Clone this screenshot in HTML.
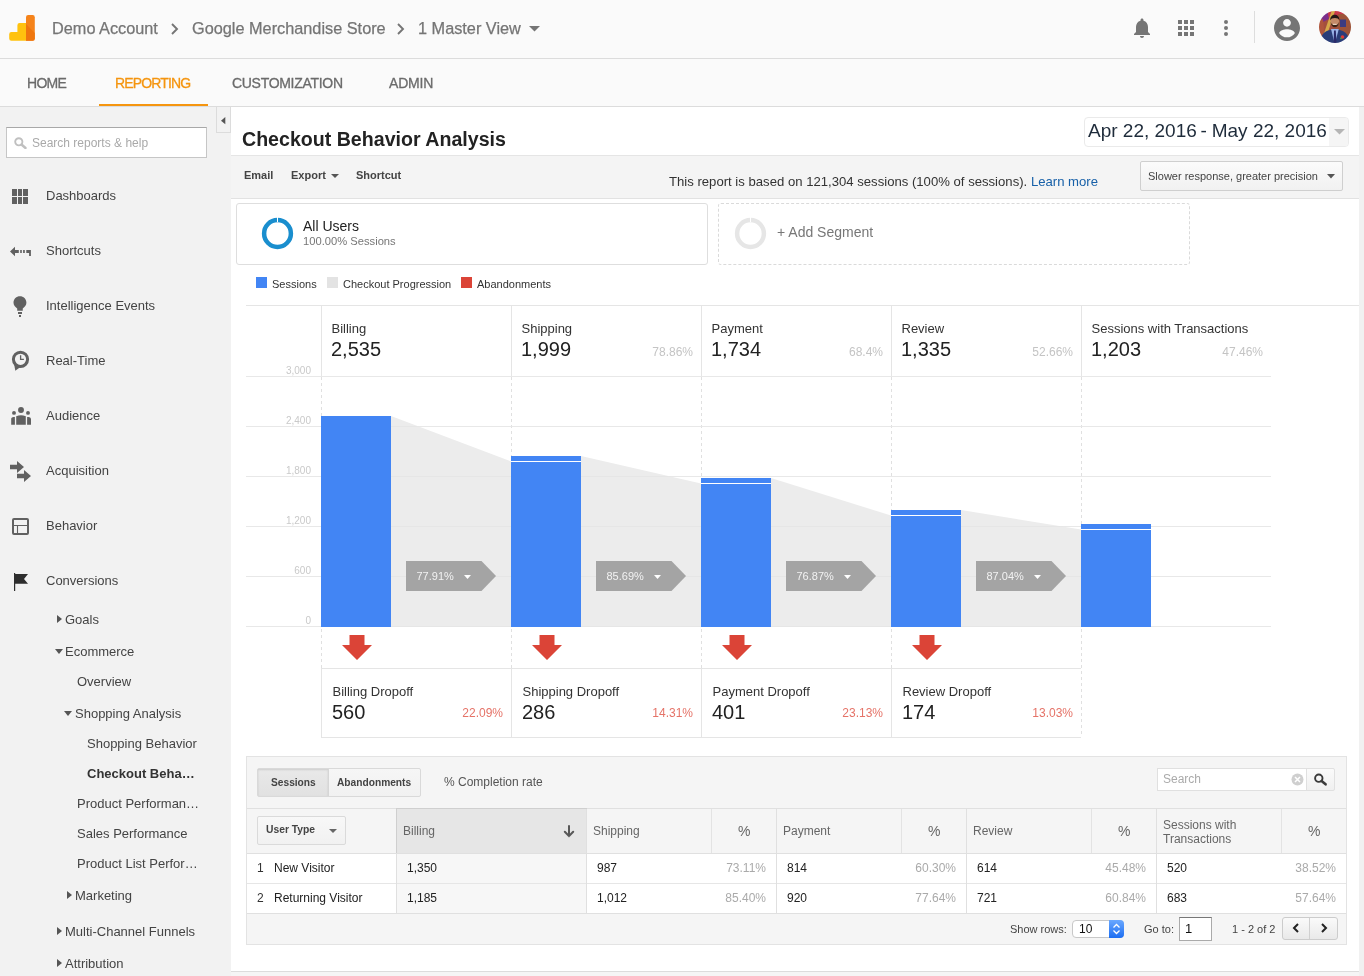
<!DOCTYPE html>
<html><head><meta charset="utf-8">
<style>
*{margin:0;padding:0;box-sizing:border-box}
html,body{width:1364px;height:976px;overflow:hidden;background:#fff;font-family:"Liberation Sans",sans-serif;position:relative}
body{will-change:transform}
.a{position:absolute;white-space:nowrap}
#hdr{left:0;top:0;width:1364px;height:59px;background:#fafafa;border-bottom:1px solid #dcdcdc}
#tabs{left:0;top:59px;width:1364px;height:48px;background:#fafafa;border-bottom:1px solid #dcdcdc}
.crumb{font-size:16.3px;color:#757575;top:19px;-webkit-text-stroke:0.25px #757575}
.tab{font-size:14px;color:#6b6b6b;top:75px;-webkit-text-stroke:0.3px currentColor}
#side{left:0;top:107px;width:231px;height:869px;background:#f2f2f2}
.nav{font-size:13px;color:#444;left:46px}
.sub{font-size:13px;color:#444}
.ico{fill:#616161}
#main{left:231px;top:107px;width:1128px;height:869px;background:#fff}
#rstrip{left:1359px;top:107px;width:5px;height:869px;background:#f1f1f1}
</style></head><body>

<!-- HEADER -->
<div class="a" id="hdr"></div>
<svg class="a" style="left:0;top:0" width="40" height="45" viewBox="0 0 40 45">
<path d="M9.2 34.2 a2.2 2.2 0 0 1 2.2-2.2 H17.4 V25.3 a2.2 2.2 0 0 1 2.2-2.2 H26.2 V40.8 H11.4 a2.2 2.2 0 0 1 -2.2-2.2 Z" fill="#ffc20e"/>
<path d="M26 17.2 a2.2 2.2 0 0 1 2.2-2.2 h4.4 a2.2 2.2 0 0 1 2.2 2.2 V38.6 a2.2 2.2 0 0 1 -2.2 2.2 H26 Z" fill="#f5831a"/>
<path d="M26 24 L34.8 33 V38.6 a2.2 2.2 0 0 1 -2.2 2.2 H26 Z" fill="#ef760e"/>
</svg>
<div class="a crumb" style="left:52px">Demo Account</div>
<svg class="a" style="left:170px;top:23px" width="10" height="12" viewBox="0 0 10 12"><path d="M2 1 L7 6 L2 11" stroke="#757575" stroke-width="1.9" fill="none"/></svg>
<div class="a crumb" style="left:192px">Google Merchandise Store</div>
<svg class="a" style="left:396px;top:23px" width="10" height="12" viewBox="0 0 10 12"><path d="M2 1 L7 6 L2 11" stroke="#757575" stroke-width="1.9" fill="none"/></svg>
<div class="a crumb" style="left:418px">1 Master View</div>
<svg class="a" style="left:529px;top:26px" width="11" height="6" viewBox="0 0 11 6"><path d="M0 0 L11 0 L5.5 5.5Z" fill="#757575"/></svg>

<!-- header right icons -->
<svg class="a" style="left:1130px;top:16px" width="24" height="24" viewBox="0 0 24 24"><path d="M12 22c1.1 0 2-.9 2-2h-4c0 1.1.89 2 2 2zm6-6v-5c0-3.07-1.64-5.64-4.5-6.32V4c0-.83-.67-1.5-1.5-1.5s-1.5.67-1.5 1.5v.68C7.63 5.36 6 7.92 6 11v5l-2 2v1h16v-1l-2-2z" fill="#757575"/></svg>
<svg class="a" style="left:1178px;top:20px" width="16" height="16" viewBox="0 0 16 16" fill="#757575">
<rect x="0" y="0" width="4" height="4"/><rect x="6" y="0" width="4" height="4"/><rect x="12" y="0" width="4" height="4"/>
<rect x="0" y="6" width="4" height="4"/><rect x="6" y="6" width="4" height="4"/><rect x="12" y="6" width="4" height="4"/>
<rect x="0" y="12" width="4" height="4"/><rect x="6" y="12" width="4" height="4"/><rect x="12" y="12" width="4" height="4"/></svg>
<svg class="a" style="left:1222px;top:19px" width="8" height="18" viewBox="0 0 8 18" fill="#757575"><circle cx="4" cy="3" r="2"/><circle cx="4" cy="9" r="2"/><circle cx="4" cy="15" r="2"/></svg>
<div class="a" style="left:1254px;top:11px;width:1px;height:32px;background:#ddd"></div>
<svg class="a" style="left:1274px;top:15px" width="26" height="26" viewBox="2 2 20 20"><path d="M12 2C6.48 2 2 6.48 2 12s4.48 10 10 10 10-4.48 10-10S17.52 2 12 2zm0 3c1.66 0 3 1.34 3 3s-1.34 3-3 3-3-1.34-3-3 1.34-3 3-3zm0 14.2c-2.5 0-4.71-1.28-6-3.22.03-1.99 4-3.08 6-3.08 1.99 0 5.97 1.09 6 3.08-1.29 1.94-3.5 3.22-6 3.22z" fill="#757575"/></svg>
<svg class="a" style="left:1319px;top:11px" width="32" height="32" viewBox="0 0 32 32">
<defs><clipPath id="av"><circle cx="16" cy="16" r="16"/></clipPath><filter id="bl"><feGaussianBlur stdDeviation="0.5"/></filter></defs>
<g clip-path="url(#av)"><g filter="url(#bl)">
<rect x="-2" y="-2" width="36" height="36" fill="#a4503c"/>
<rect x="-2" y="-2" width="36" height="8" fill="#c8384a"/>
<path d="M-2 4 L8 -2 L10 8 L-2 14Z" fill="#7a2e8a"/>
<path d="M-2 10 L4 8 L6 30 L-2 30Z" fill="#b0563e"/>
<path d="M3 28 L13 -1 L16 0 L6 30Z" fill="#d6a848"/>
<rect x="19" y="3" width="14" height="22" fill="#9c5238"/>
<rect x="21" y="8.5" width="6" height="7.5" fill="#3a3a80"/>

<ellipse cx="15.8" cy="10.5" rx="4.3" ry="5.8" fill="#c48a68"/>
<path d="M11.2 9.5 C10.8 1.8 20.8 1.8 20.4 9.5 C19.8 6.2 12 6.2 11.2 9.5Z" fill="#241812"/>
<path d="M11.6 11 C11.8 18 19.8 18 20 11 L19.2 12.5 C18.5 14.5 13 14.5 12.4 12.5Z" fill="#3a2418"/><rect x="14" y="12.8" width="3.6" height="1" fill="#f0e0d0"/>
<path d="M1 34 C1 22 7 18.5 15.8 18.5 C24.5 18.5 30.5 22 31 34Z" fill="#2c3e78"/>
<path d="M12 18 L15.8 33 L19.8 18Z" fill="#9ab4e8"/>
<path d="M15 19.5 L16.8 19.5 L17.6 33 L14.6 33Z" fill="#2c2c6a"/>
<circle cx="23.5" cy="26" r="1.8" fill="#e03a36"/>
<circle cx="22" cy="27.3" r="0.9" fill="#4aa040"/>
</g></g></svg>

<!-- TABS -->
<div class="a" id="tabs"></div>
<div class="a tab" style="left:27px;letter-spacing:-0.7px">HOME</div>
<div class="a tab" style="left:115px;color:#f5950f;letter-spacing:-0.85px">REPORTING</div>
<div class="a" style="left:99px;top:104px;width:109px;height:2px;background:#f5950f"></div>
<div class="a tab" style="left:232px;letter-spacing:-0.3px">CUSTOMIZATION</div>
<div class="a tab" style="left:389px;letter-spacing:-0.2px">ADMIN</div>

<!-- SIDEBAR -->
<div class="a" id="side"></div>
<div class="a" id="rstrip"></div>

<!-- collapse btn -->
<div class="a" style="left:216px;top:107px;width:15px;height:26px;background:#f2f2f2;border:1px solid #dcdcdc;border-top:none"></div>
<svg class="a" style="left:221px;top:117px" width="4.5" height="7.5" viewBox="0 0 4.5 7.5"><path d="M4.3 0 V7.3 L0 3.65Z" fill="#555"/></svg>
<!-- search -->
<div class="a" style="left:6px;top:127px;width:201px;height:31px;background:#fff;border:1px solid #c6c6c6;border-top-color:#a8a8a8"></div>
<svg class="a" style="left:14px;top:137px" width="13" height="12" viewBox="0 0 13 12"><circle cx="4.8" cy="4.8" r="3.6" stroke="#c0c0c0" stroke-width="1.9" fill="none"/><path d="M7.5 7.5 L11.5 11" stroke="#c0c0c0" stroke-width="2.4" stroke-linecap="round"/></svg>
<div class="a" style="left:32px;top:136px;font-size:12px;color:#a9a9a9">Search reports &amp; help</div>

<!-- nav items -->
<svg class="a ico" style="left:12px;top:189px" width="16" height="15" viewBox="0 0 16 15"><rect x="0" y="0" width="5" height="7"/><rect x="6" y="0" width="4" height="7"/><rect x="11" y="0" width="5" height="7"/><rect x="0" y="8" width="5" height="7"/><rect x="6" y="8" width="4" height="7"/><rect x="11" y="8" width="5" height="7"/></svg>
<div class="a nav" style="top:188px">Dashboards</div>

<svg class="a ico" style="left:8px;top:240px" width="26" height="22" viewBox="0 0 26 22"><path d="M2 11.5 L7 6.8 V10 H10.8 V13 H7 V16.2Z"/><rect x="12.2" y="10" width="1.6" height="3"/><rect x="15.1" y="10" width="1.7" height="3"/><path d="M18.3 10 H22.9 V16 H21.1 V13 H18.3Z"/></svg>
<div class="a nav" style="top:243px">Shortcuts</div>

<svg class="a ico" style="left:8px;top:292px" width="26" height="30" viewBox="0 0 26 30"><path d="M9.2 18.7 V16.6 C7.3 15 5.5 13.3 5.5 10.8 C5.5 7 8.4 4.3 11.95 4.3 C15.5 4.3 18.4 7 18.4 10.8 C18.4 13.3 16.6 15 14.75 16.6 V18.7Z"/><rect x="10" y="20" width="4" height="2"/><rect x="11" y="23" width="2" height="2"/></svg>
<div class="a nav" style="top:298px">Intelligence Events</div>

<svg class="a" style="left:8px;top:346px" width="26" height="28" viewBox="0 0 26 28"><circle cx="12.5" cy="13.3" r="7.1" stroke="#616161" stroke-width="3" fill="none"/><path d="M6 17.5 L7.3 24.7 L13.5 20.3Z" fill="#616161"/><path d="M12.6 9.2 V13.3 H15.9" stroke="#616161" stroke-width="1.3" fill="none"/></svg>
<div class="a nav" style="top:353px">Real-Time</div>

<svg class="a ico" style="left:8px;top:402px" width="26" height="28" viewBox="0 0 26 28"><circle cx="13" cy="8" r="2.95"/><circle cx="6" cy="10.9" r="1.95"/><circle cx="20" cy="10.9" r="1.95"/><path d="M8.2 22.8 V14.3 Q13 12.4 17.8 14.3 V22.8Z"/><path d="M3.2 22.8 V16.6 Q3.5 15 5.5 15 H6.9 V22.8Z"/><path d="M19.1 22.8 V15 H20.5 Q22.5 15 23 16.6 V22.8Z"/></svg>
<div class="a nav" style="top:408px">Audience</div>

<svg class="a ico" style="left:10px;top:461px" width="21" height="22" viewBox="0 0 21 22"><path d="M0 3.7 H7 V0 L14 6 L7 12 V8.3 H0Z"/><path d="M7 12.7 H14 V9 L21 15 L14 21 V17.3 H7Z"/></svg>
<div class="a nav" style="top:463px">Acquisition</div>

<svg class="a" style="left:12px;top:518px" width="17" height="17" viewBox="0 0 17 17"><rect x="1" y="1" width="15" height="15" rx="1" stroke="#616161" stroke-width="2" fill="none"/><path d="M1 7.5 H16 M5.5 7.5 V16" stroke="#616161" stroke-width="1.1"/></svg>
<div class="a nav" style="top:518px">Behavior</div>

<svg class="a" style="left:8px;top:566px" width="26" height="30" viewBox="0 0 26 30"><rect x="6" y="7" width="1.2" height="18" fill="#2e2e2e"/><path d="M7 8 H20 L16 12.9 L20 17.8 H7Z" fill="#2e2e2e"/></svg>
<div class="a nav" style="top:573px">Conversions</div>

<!-- sub items -->
<svg class="a" style="left:57px;top:615px" width="5" height="8" viewBox="0 0 5 8"><path d="M0 0 L5 4 L0 8Z" fill="#555"/></svg>
<div class="a sub" style="left:65px;top:612px">Goals</div>
<svg class="a" style="left:55px;top:649px" width="8" height="5" viewBox="0 0 8 5"><path d="M0 0 H8 L4 5Z" fill="#555"/></svg>
<div class="a sub" style="left:65px;top:644px">Ecommerce</div>
<div class="a sub" style="left:77px;top:674px">Overview</div>
<svg class="a" style="left:64px;top:711px" width="8" height="5" viewBox="0 0 8 5"><path d="M0 0 H8 L4 5Z" fill="#555"/></svg>
<div class="a sub" style="left:75px;top:706px">Shopping Analysis</div>
<div class="a sub" style="left:87px;top:736px">Shopping Behavior</div>
<div class="a sub" style="left:87px;top:766px;font-weight:bold;color:#333">Checkout Beha…</div>
<div class="a sub" style="left:77px;top:796px">Product Performan…</div>
<div class="a sub" style="left:77px;top:826px">Sales Performance</div>
<div class="a sub" style="left:77px;top:856px">Product List Perfor…</div>
<svg class="a" style="left:67px;top:891px" width="5" height="8" viewBox="0 0 5 8"><path d="M0 0 L5 4 L0 8Z" fill="#555"/></svg>
<div class="a sub" style="left:75px;top:888px">Marketing</div>
<svg class="a" style="left:57px;top:927px" width="5" height="8" viewBox="0 0 5 8"><path d="M0 0 L5 4 L0 8Z" fill="#555"/></svg>
<div class="a sub" style="left:65px;top:924px">Multi-Channel Funnels</div>
<svg class="a" style="left:57px;top:959px" width="5" height="8" viewBox="0 0 5 8"><path d="M0 0 L5 4 L0 8Z" fill="#555"/></svg>
<div class="a sub" style="left:65px;top:956px">Attribution</div>


<!-- MAIN -->
<div class="a" style="left:231px;top:155px;width:1128px;height:1px;background:#e5e5e5"></div>
<div class="a" style="left:242px;top:128px;font-size:19.6px;font-weight:bold;color:#222">Checkout Behavior Analysis</div>
<!-- date range -->
<div class="a" style="left:1084px;top:117px;width:265px;height:30px;border:1px solid #eaeaea;border-radius:4px;background:#fff"></div>
<div class="a" style="left:1329px;top:118px;width:19px;height:28px;background:#f5f5f5;border-radius:0 3px 3px 0"></div>
<svg class="a" style="left:1334px;top:129px" width="11" height="6" viewBox="0 0 11 6"><path d="M0 0 H11 L5.5 5.5Z" fill="#b5b5b5"/></svg>
<div class="a" style="left:1088px;top:120px;font-size:19px;color:#1e2b3a">Apr 22, 2016<span style="letter-spacing:-1.5px"> </span>-<span style="letter-spacing:-0.5px"> </span>May 22, 2016</div>

<!-- toolbar -->
<div class="a" style="left:231px;top:156px;width:1128px;height:43px;background:#f4f4f4;border-bottom:1px solid #e2e2e2"></div>
<div class="a" style="left:244px;top:169px;font-size:11px;font-weight:bold;color:#444">Email</div>
<div class="a" style="left:291px;top:169px;font-size:11px;font-weight:bold;color:#444">Export</div>
<svg class="a" style="left:331px;top:174px" width="8" height="4" viewBox="0 0 8 4"><path d="M0 0 H8 L4 4Z" fill="#555"/></svg>
<div class="a" style="left:356px;top:169px;font-size:11px;font-weight:bold;color:#444">Shortcut</div>
<div class="a" style="left:669px;top:174px;font-size:13.13px;color:#333">This report is based on 121,304 sessions (100% of sessions). <span style="color:#1760a8">Learn more</span></div>
<div class="a" style="left:1140px;top:161px;width:203px;height:30px;border:1px solid #cfcfcf;border-radius:2px;background:linear-gradient(#fbfbfb,#f1f1f1)"></div>
<div class="a" style="left:1148px;top:170px;font-size:11px;color:#444">Slower response, greater precision</div>
<svg class="a" style="left:1327px;top:174px" width="8" height="5" viewBox="0 0 8 5"><path d="M0 0 H8 L4 4.5Z" fill="#555"/></svg>

<!-- segments -->
<div class="a" style="left:236px;top:203px;width:472px;height:62px;border:1px solid #dedede;border-radius:3px"></div>
<svg class="a" style="left:261px;top:217px" width="33" height="33" viewBox="0 0 33 33"><circle cx="16.5" cy="16.5" r="13.4" stroke="#1a8ece" stroke-width="4.5" fill="none"/><rect x="16" y="0" width="1" height="5" fill="#fff"/></svg>
<div class="a" style="left:303px;top:218px;font-size:14px;color:#222">All Users</div>
<div class="a" style="left:303px;top:235px;font-size:11.2px;color:#777">100.00% Sessions</div>
<div class="a" style="left:718px;top:203px;width:472px;height:62px;border:1px dashed #dadada;border-radius:3px"></div>
<svg class="a" style="left:734px;top:217px" width="33" height="33" viewBox="0 0 33 33"><circle cx="16.5" cy="16.5" r="13.4" stroke="#e6e6e6" stroke-width="4.5" fill="none"/><rect x="16" y="0" width="1" height="5" fill="#fff"/></svg>
<div class="a" style="left:777px;top:224px;font-size:14px;color:#777">+ Add Segment</div>

<!-- legend -->
<div class="a" style="left:256px;top:277px;width:11px;height:11px;background:#4285f4"></div>
<div class="a" style="left:272px;top:278px;font-size:11px;color:#333">Sessions</div>
<div class="a" style="left:327px;top:277px;width:11px;height:11px;background:#e3e3e3"></div>
<div class="a" style="left:343px;top:278px;font-size:11px;color:#333">Checkout Progression</div>
<div class="a" style="left:461px;top:277px;width:11px;height:11px;background:#db4437"></div>
<div class="a" style="left:477px;top:278px;font-size:11px;color:#333">Abandonments</div>

<!-- CHART -->
<svg class="a" style="left:0;top:0" width="1364" height="976" viewBox="0 0 1364 976" font-family="Liberation Sans, sans-serif">
<rect x="246" y="305" width="1113" height="1" fill="#e5e5e5"/>
<rect x="321" y="305" width="1" height="71" fill="#e5e5e5"/>
<rect x="511" y="305" width="1" height="71" fill="#e5e5e5"/>
<rect x="701" y="305" width="1" height="71" fill="#e5e5e5"/>
<rect x="891" y="305" width="1" height="71" fill="#e5e5e5"/>
<rect x="1081" y="305" width="1" height="71" fill="#e5e5e5"/>
<line x1="321.5" y1="377" x2="321.5" y2="668" stroke="#e0e0e0" stroke-width="1" stroke-dasharray="3,3"/>
<line x1="511.5" y1="377" x2="511.5" y2="668" stroke="#e0e0e0" stroke-width="1" stroke-dasharray="3,3"/>
<line x1="701.5" y1="377" x2="701.5" y2="668" stroke="#e0e0e0" stroke-width="1" stroke-dasharray="3,3"/>
<line x1="891.5" y1="377" x2="891.5" y2="668" stroke="#e0e0e0" stroke-width="1" stroke-dasharray="3,3"/>
<line x1="1081.5" y1="377" x2="1081.5" y2="737" stroke="#e0e0e0" stroke-width="1" stroke-dasharray="3,3"/>
<polygon points="391,416 511,461.5 511,627 391,627" fill="#ececec"/>
<polygon points="581,456 701,483.5 701,627 581,627" fill="#ececec"/>
<polygon points="771,478 891,515.5 891,627 771,627" fill="#ececec"/>
<polygon points="961,510 1081,529.5 1081,627 961,627" fill="#ececec"/>
<rect x="246" y="376" width="1025" height="1" fill="#e6e6e6" fill-opacity="0.9"/>
<rect x="246" y="426" width="1025" height="1" fill="#e6e6e6" fill-opacity="0.9"/>
<rect x="246" y="476" width="1025" height="1" fill="#e6e6e6" fill-opacity="0.9"/>
<rect x="246" y="526" width="1025" height="1" fill="#e6e6e6" fill-opacity="0.9"/>
<rect x="246" y="576" width="1025" height="1" fill="#e6e6e6" fill-opacity="0.9"/>
<rect x="246" y="626" width="1025" height="1" fill="#e6e6e6" fill-opacity="0.9"/>
<text x="311" y="374" font-size="10" fill="#c9c9c9" text-anchor="end">3,000</text>
<text x="311" y="424" font-size="10" fill="#c9c9c9" text-anchor="end">2,400</text>
<text x="311" y="474" font-size="10" fill="#c9c9c9" text-anchor="end">1,800</text>
<text x="311" y="524" font-size="10" fill="#c9c9c9" text-anchor="end">1,200</text>
<text x="311" y="574" font-size="10" fill="#c9c9c9" text-anchor="end">600</text>
<text x="311" y="624" font-size="10" fill="#c9c9c9" text-anchor="end">0</text>
<rect x="321" y="416" width="70" height="211" fill="#4285f4"/>
<rect x="511" y="456" width="70" height="171" fill="#4285f4"/>
<rect x="511" y="461" width="70" height="1" fill="#fff"/>
<rect x="701" y="478" width="70" height="149" fill="#4285f4"/>
<rect x="701" y="483" width="70" height="1" fill="#fff"/>
<rect x="891" y="510" width="70" height="117" fill="#4285f4"/>
<rect x="891" y="515" width="70" height="1" fill="#fff"/>
<rect x="1081" y="524" width="70" height="103" fill="#4285f4"/>
<rect x="1081" y="529" width="70" height="1" fill="#fff"/>
<text x="331.5" y="333" font-size="13" fill="#333">Billing</text>
<text x="331" y="356" font-size="20" fill="#222">2,535</text>
<text x="521.5" y="333" font-size="13" fill="#333">Shipping</text>
<text x="521" y="356" font-size="20" fill="#222">1,999</text>
<text x="693" y="356" font-size="12" fill="#c4c4c4" text-anchor="end">78.86%</text>
<text x="711.5" y="333" font-size="13" fill="#333">Payment</text>
<text x="711" y="356" font-size="20" fill="#222">1,734</text>
<text x="883" y="356" font-size="12" fill="#c4c4c4" text-anchor="end">68.4%</text>
<text x="901.5" y="333" font-size="13" fill="#333">Review</text>
<text x="901" y="356" font-size="20" fill="#222">1,335</text>
<text x="1073" y="356" font-size="12" fill="#c4c4c4" text-anchor="end">52.66%</text>
<text x="1091.5" y="333" font-size="13" fill="#333">Sessions with Transactions</text>
<text x="1091" y="356" font-size="20" fill="#222">1,203</text>
<text x="1263" y="356" font-size="12" fill="#c4c4c4" text-anchor="end">47.46%</text>
<polygon points="406,561 481.5,561 496,576 481.5,591 406,591" fill="#a4a4a4"/>
<text x="416.5" y="580" font-size="11" fill="#f2f2f2">77.91%</text>
<polygon points="464,575 471,575 467.5,579" fill="#fff"/>
<polygon points="596,561 671.5,561 686,576 671.5,591 596,591" fill="#a4a4a4"/>
<text x="606.5" y="580" font-size="11" fill="#f2f2f2">85.69%</text>
<polygon points="654,575 661,575 657.5,579" fill="#fff"/>
<polygon points="786,561 861.5,561 876,576 861.5,591 786,591" fill="#a4a4a4"/>
<text x="796.5" y="580" font-size="11" fill="#f2f2f2">76.87%</text>
<polygon points="844,575 851,575 847.5,579" fill="#fff"/>
<polygon points="976,561 1051.5,561 1066,576 1051.5,591 976,591" fill="#a4a4a4"/>
<text x="986.5" y="580" font-size="11" fill="#f2f2f2">87.04%</text>
<polygon points="1034,575 1041,575 1037.5,579" fill="#fff"/>
<polygon points="349.5,635 364.5,635 364.5,645 372,645 357,660 342,645 349.5,645" fill="#db4437"/>
<polygon points="539.5,635 554.5,635 554.5,645 562,645 547,660 532,645 539.5,645" fill="#db4437"/>
<polygon points="729.5,635 744.5,635 744.5,645 752,645 737,660 722,645 729.5,645" fill="#db4437"/>
<polygon points="919.5,635 934.5,635 934.5,645 942,645 927,660 912,645 919.5,645" fill="#db4437"/>
<rect x="321" y="668" width="760" height="1" fill="#e5e5e5"/>
<rect x="321" y="737" width="760" height="1" fill="#e5e5e5"/>
<rect x="321" y="668" width="1" height="70" fill="#e5e5e5"/>
<text x="332.5" y="696" font-size="13" fill="#333">Billing Dropoff</text>
<text x="332" y="719" font-size="20" fill="#222">560</text>
<text x="503" y="717" font-size="12" fill="#e57368" text-anchor="end">22.09%</text>
<rect x="511" y="668" width="1" height="70" fill="#e5e5e5"/>
<text x="522.5" y="696" font-size="13" fill="#333">Shipping Dropoff</text>
<text x="522" y="719" font-size="20" fill="#222">286</text>
<text x="693" y="717" font-size="12" fill="#e57368" text-anchor="end">14.31%</text>
<rect x="701" y="668" width="1" height="70" fill="#e5e5e5"/>
<text x="712.5" y="696" font-size="13" fill="#333">Payment Dropoff</text>
<text x="712" y="719" font-size="20" fill="#222">401</text>
<text x="883" y="717" font-size="12" fill="#e57368" text-anchor="end">23.13%</text>
<rect x="891" y="668" width="1" height="70" fill="#e5e5e5"/>
<text x="902.5" y="696" font-size="13" fill="#333">Review Dropoff</text>
<text x="902" y="719" font-size="20" fill="#222">174</text>
<text x="1073" y="717" font-size="12" fill="#e57368" text-anchor="end">13.03%</text>
</svg>
<!-- /CHART -->

<!-- TABLE -->
<div class="a" style="left:246px;top:756px;width:1101px;height:189px;background:#f5f5f5;border:1px solid #e3e3e3"></div>
<!-- toggle -->
<div class="a" style="left:257px;top:768px;width:164px;height:29px;border:1px solid #d9d9d9;border-radius:2px;background:linear-gradient(#f6f6f6,#f1f1f1)"></div>
<div class="a" style="left:258px;top:769px;width:71px;height:27px;background:linear-gradient(#e9e9e9,#e1e1e1);box-shadow:inset 0 1px 2px rgba(0,0,0,0.12);border-right:1px solid #d6d6d6"></div>
<div class="a" style="left:271px;top:777px;font-size:10.2px;font-weight:bold;color:#444">Sessions</div>
<div class="a" style="left:337px;top:777px;font-size:10.2px;font-weight:bold;color:#444">Abandonments</div>
<div class="a" style="left:444px;top:775px;font-size:12px;color:#555">% Completion rate</div>
<!-- search -->
<div class="a" style="left:1157px;top:768px;width:150px;height:23px;background:#fff;border:1px solid #e0e0e0"></div>
<div class="a" style="left:1163px;top:772px;font-size:12px;color:#aaa">Search</div>
<svg class="a" style="left:1291px;top:773px" width="13" height="13" viewBox="0 0 13 13"><circle cx="6.5" cy="6.5" r="6" fill="#cfcfcf"/><path d="M4 4 L9 9 M9 4 L4 9" stroke="#fff" stroke-width="1.5"/></svg>
<div class="a" style="left:1306px;top:768px;width:29px;height:23px;background:linear-gradient(#fafafa,#f0f0f0);border:1px solid #e0e0e0;border-radius:0 2px 2px 0"></div>
<svg class="a" style="left:1313px;top:773px" width="15" height="14" viewBox="0 0 15 14"><circle cx="5.8" cy="5.2" r="3.7" stroke="#3a3a3a" stroke-width="1.9" fill="none"/><path d="M8.6 8 L12.6 11.3" stroke="#3a3a3a" stroke-width="2.6" stroke-linecap="round"/></svg>

<!-- header row -->
<div class="a" style="left:247px;top:808px;width:1099px;height:1px;background:#e0e0e0"></div>
<div class="a" style="left:396px;top:808px;width:191px;height:46px;background:#e6e6e6;border:1px solid #cfcfcf"></div>
<div class="a" style="left:257px;top:816px;width:89px;height:29px;border:1px solid #dadada;border-radius:2px;background:linear-gradient(#f8f8f8,#f1f1f1)"></div>
<div class="a" style="left:266px;top:824px;font-size:10.3px;font-weight:bold;color:#444">User Type</div>
<svg class="a" style="left:329px;top:829px" width="8" height="5" viewBox="0 0 8 5"><path d="M0 0 H8 L4 4Z" fill="#666"/></svg>
<div class="a" style="left:403px;top:824px;font-size:12px;color:#666">Billing</div>
<svg class="a" style="left:563px;top:825px" width="12" height="13" viewBox="0 0 12 13"><path d="M6 1 V11 M1.8 6.8 L6 11 L10.2 6.8" stroke="#585858" stroke-width="2" stroke-linecap="round" fill="none"/></svg>
<div class="a" style="left:586px;top:809px;width:1px;height:104px;background:#e0e0e0"></div>
<div class="a" style="left:711px;top:809px;width:1px;height:44px;background:#e3e3e3"></div>
<div class="a" style="left:593px;top:824px;font-size:12px;color:#666">Shipping</div>
<div class="a" style="left:738px;top:823px;font-size:14px;color:#666">%</div>
<div class="a" style="left:776px;top:809px;width:1px;height:104px;background:#e0e0e0"></div>
<div class="a" style="left:901px;top:809px;width:1px;height:44px;background:#e3e3e3"></div>
<div class="a" style="left:783px;top:824px;font-size:12px;color:#666">Payment</div>
<div class="a" style="left:928px;top:823px;font-size:14px;color:#666">%</div>
<div class="a" style="left:966px;top:809px;width:1px;height:104px;background:#e0e0e0"></div>
<div class="a" style="left:1091px;top:809px;width:1px;height:44px;background:#e3e3e3"></div>
<div class="a" style="left:973px;top:824px;font-size:12px;color:#666">Review</div>
<div class="a" style="left:1118px;top:823px;font-size:14px;color:#666">%</div>
<div class="a" style="left:1156px;top:809px;width:1px;height:104px;background:#e0e0e0"></div>
<div class="a" style="left:1281px;top:809px;width:1px;height:44px;background:#e3e3e3"></div>
<div class="a" style="left:1163px;top:818px;font-size:12px;line-height:14px;color:#666">Sessions with<br>Transactions</div>
<div class="a" style="left:1308px;top:823px;font-size:14px;color:#666">%</div>

<div class="a" style="left:247px;top:853px;width:1099px;height:61px;background:#fff"></div>
<div class="a" style="left:396px;top:854px;width:190px;height:59px;background:#f7f7f7"></div>
<div class="a" style="left:247px;top:853px;width:1099px;height:1px;background:#e0e0e0"></div>
<div class="a" style="left:247px;top:883px;width:1099px;height:1px;background:#e6e6e6"></div>
<div class="a" style="left:247px;top:913px;width:1099px;height:1px;background:#e0e0e0"></div>
<div class="a" style="left:396px;top:854px;width:1px;height:59px;background:#e0e0e0"></div>
<div class="a" style="left:586px;top:854px;width:1px;height:59px;background:#e0e0e0"></div>
<div class="a" style="left:776px;top:854px;width:1px;height:59px;background:#e0e0e0"></div>
<div class="a" style="left:966px;top:854px;width:1px;height:59px;background:#e0e0e0"></div>
<div class="a" style="left:1156px;top:854px;width:1px;height:59px;background:#e0e0e0"></div>
<div class="a" style="left:257px;top:861px;font-size:12px;color:#333">1</div>
<div class="a" style="left:274px;top:861px;font-size:12px;color:#222">New Visitor</div>
<div class="a" style="left:407px;top:861px;font-size:12px;color:#222">1,350</div>
<div class="a" style="left:597px;top:861px;font-size:12px;color:#222">987</div>
<div class="a" style="left:586px;top:861px;width:180px;text-align:right;font-size:12px;color:#aaa">73.11%</div>
<div class="a" style="left:787px;top:861px;font-size:12px;color:#222">814</div>
<div class="a" style="left:776px;top:861px;width:180px;text-align:right;font-size:12px;color:#aaa">60.30%</div>
<div class="a" style="left:977px;top:861px;font-size:12px;color:#222">614</div>
<div class="a" style="left:966px;top:861px;width:180px;text-align:right;font-size:12px;color:#aaa">45.48%</div>
<div class="a" style="left:1167px;top:861px;font-size:12px;color:#222">520</div>
<div class="a" style="left:1156px;top:861px;width:180px;text-align:right;font-size:12px;color:#aaa">38.52%</div>
<div class="a" style="left:257px;top:891px;font-size:12px;color:#333">2</div>
<div class="a" style="left:274px;top:891px;font-size:12px;color:#222">Returning Visitor</div>
<div class="a" style="left:407px;top:891px;font-size:12px;color:#222">1,185</div>
<div class="a" style="left:597px;top:891px;font-size:12px;color:#222">1,012</div>
<div class="a" style="left:586px;top:891px;width:180px;text-align:right;font-size:12px;color:#aaa">85.40%</div>
<div class="a" style="left:787px;top:891px;font-size:12px;color:#222">920</div>
<div class="a" style="left:776px;top:891px;width:180px;text-align:right;font-size:12px;color:#aaa">77.64%</div>
<div class="a" style="left:977px;top:891px;font-size:12px;color:#222">721</div>
<div class="a" style="left:966px;top:891px;width:180px;text-align:right;font-size:12px;color:#aaa">60.84%</div>
<div class="a" style="left:1167px;top:891px;font-size:12px;color:#222">683</div>
<div class="a" style="left:1156px;top:891px;width:180px;text-align:right;font-size:12px;color:#aaa">57.64%</div>

<!-- footer -->
<div class="a" style="left:1010px;top:923px;font-size:11px;color:#444">Show rows:</div>
<div class="a" style="left:1072px;top:920px;width:52px;height:18px;background:#fff;border:1px solid #c8c8c8;border-radius:4px"></div>
<div class="a" style="left:1109px;top:920px;width:15px;height:18px;background:linear-gradient(#6aa8ff,#1c6ef2);border-radius:0 4px 4px 0"></div>
<svg class="a" style="left:1112px;top:923px" width="9" height="12" viewBox="0 0 9 12"><path d="M1.5 4.5 L4.5 1.5 L7.5 4.5 M1.5 7.5 L4.5 10.5 L7.5 7.5" stroke="#fff" stroke-width="1.3" fill="none"/></svg>
<div class="a" style="left:1079px;top:922px;font-size:12px;color:#111">10</div>
<div class="a" style="left:1144px;top:923px;font-size:11px;color:#444">Go to:</div>
<div class="a" style="left:1179px;top:917px;width:33px;height:24px;background:#fff;border:1px solid #aaa;border-top-color:#777"></div>
<div class="a" style="left:1185px;top:921px;font-size:13px;color:#111">1</div>
<div class="a" style="left:1232px;top:923px;font-size:11px;color:#444">1 - 2 of 2</div>
<div class="a" style="left:1282px;top:917px;width:56px;height:23px;border:1px solid #ccc;border-radius:3px;background:linear-gradient(#fafafa,#e9e9e9)"></div>
<div class="a" style="left:1309px;top:918px;width:1px;height:21px;background:#d0d0d0"></div>
<svg class="a" style="left:1292px;top:923px" width="8" height="10" viewBox="0 0 8 10"><path d="M6 1 L2 5 L6 9" stroke="#222" stroke-width="2" fill="none"/></svg>
<svg class="a" style="left:1320px;top:923px" width="8" height="10" viewBox="0 0 8 10"><path d="M2 1 L6 5 L2 9" stroke="#222" stroke-width="2" fill="none"/></svg>
<!-- bottom line -->
<div class="a" style="left:231px;top:971px;width:1128px;height:1px;background:#dcdcdc"></div>
<div class="a" style="left:231px;top:972px;width:1128px;height:4px;background:#f5f5f5"></div>
<!-- /TABLE -->

</body></html>
